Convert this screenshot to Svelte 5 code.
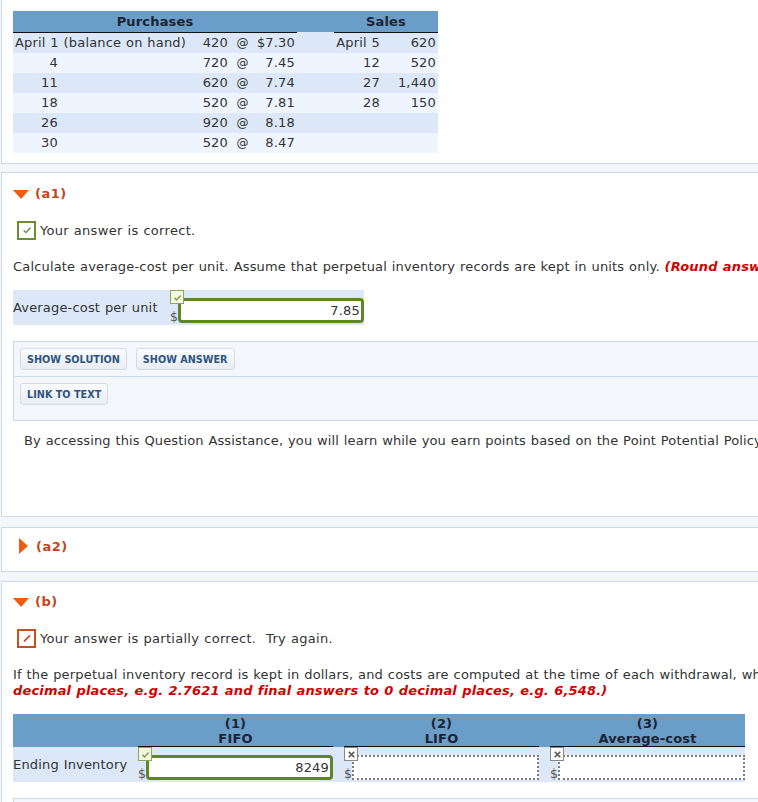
<script>
	const purchases = [
		["April 1 (balance on hand)", "420", "$7.30", "April 5", "620"],
		["4", "720", "7.45", "12", "520"],
		["11", "620", "7.74", "27", "1,440"],
		["18", "520", "7.81", "28", "150"],
		["26", "920", "8.18", "", ""],
		["30", "520", "8.47", "", ""]
	];
</script>

<div class="page">
	<section class="card first">
		<table class="stock">
			<colgroup>
				<col style="width:177px" />
				<col style="width:40px" />
				<col style="width:20px" />
				<col style="width:47px" />
				<col style="width:37px" />
				<col style="width:48px" />
				<col style="width:56px" />
			</colgroup>
			<thead>
				<tr>
					<th colspan="4" class="ruled">Purchases</th>
					<th></th>
					<th colspan="2" class="ruled">Sales</th>
				</tr>
			</thead>
			<tbody>
				{#each purchases as row, i}
					<tr class:odd={i % 2 === 0}>
						<td>
							{#if i === 0}{row[0]}{:else}<span class="day">{row[0]}</span>{/if}
						</td>
						<td class="num">{row[1]}</td>
						<td class="at">@</td>
						<td class="num">{row[2]}</td>
						<td></td>
						<td class="num">{row[3]}</td>
						<td class="num">{row[4]}</td>
					</tr>
				{/each}
			</tbody>
		</table>
	</section>

	<section class="card a1">
		<h3><span class="tri down"></span>(a1)</h3>
		<div class="status">
			<span class="box ok">
				<svg viewBox="0 0 16 16" width="12" height="12"><path d="M3.5 8.5l3 3 6-6.5" fill="none" stroke="#5b8a2a" stroke-width="1.8" /></svg>
			</span>
			Your answer is correct.
		</div>
		<p class="prompt">Calculate average-cost per unit. Assume that perpetual inventory records are kept in units only. <em>(Round answer to 2 decimal places, e.g. 2.76.)</em></p>
		<div class="answer-row">
			<span class="label">Average-cost per unit</span>
			<span class="field wide">
				<span class="flag ok">
					<svg viewBox="0 0 16 16" width="11" height="11"><path d="M3.5 8.5l3 3 6-6.5" fill="none" stroke="#7a9a3a" stroke-width="2" /></svg>
				</span>
				<span class="dollar">$</span>
				<span class="input good">7.85</span>
			</span>
		</div>
		<div class="assist">
			<div class="assist-row">
				<button>SHOW SOLUTION</button>
				<button>SHOW ANSWER</button>
			</div>
			<div class="assist-row">
				<button>LINK TO TEXT</button>
			</div>
		</div>
		<p class="policy">By accessing this Question Assistance, you will learn while you earn points based on the Point Potential Policy.</p>
	</section>

	<section class="card a2">
		<h3><span class="tri right"></span>(a2)</h3>
	</section>

	<section class="card b">
		<h3><span class="tri down"></span>(b)</h3>
		<div class="status">
			<span class="box part">
				<svg viewBox="0 0 16 16" width="12" height="12"><path d="M4 12.5L12 4.5" fill="none" stroke="#c8501e" stroke-width="2.4" /></svg>
			</span>
			Your answer is partially correct.&nbsp; Try again.
		</div>
		<p class="prompt">If the perpetual inventory record is kept in dollars, and costs are computed at the time of each withdrawal, what is the amount<br /><em>decimal places, e.g. 2.7621 and final answers to 0 decimal places, e.g. 6,548.)</em></p>
		<table class="ending">
			<colgroup>
				<col style="width:125px" />
				<col style="width:195px" />
				<col style="width:11px" />
				<col style="width:195px" />
				<col style="width:11px" />
				<col style="width:195px" />
			</colgroup>
			<thead>
				<tr>
					<th></th>
					<th class="ruled">(1)<br />FIFO</th>
					<th></th>
					<th class="ruled">(2)<br />LIFO</th>
					<th></th>
					<th class="ruled">(3)<br />Average-cost</th>
				</tr>
			</thead>
			<tbody>
				<tr>
					<td class="label">Ending Inventory</td>
					<td>
						<span class="field">
							<span class="flag ok">
								<svg viewBox="0 0 16 16" width="11" height="11"><path d="M3.5 8.5l3 3 6-6.5" fill="none" stroke="#7a9a3a" stroke-width="2" /></svg>
							</span>
							<span class="dollar">$</span>
							<span class="input good">8249</span>
						</span>
					</td>
					<td></td>
					<td>
						<span class="field">
							<span class="flag bad">
								<svg viewBox="0 0 16 16" width="11" height="11"><path d="M4 4l8 8M12 4l-8 8" fill="none" stroke="#555" stroke-width="2.4" /></svg>
							</span>
							<span class="dollar">$</span>
							<span class="input empty"></span>
						</span>
					</td>
					<td></td>
					<td>
						<span class="field">
							<span class="flag bad">
								<svg viewBox="0 0 16 16" width="11" height="11"><path d="M4 4l8 8M12 4l-8 8" fill="none" stroke="#555" stroke-width="2.4" /></svg>
							</span>
							<span class="dollar">$</span>
							<span class="input empty"></span>
						</span>
					</td>
				</tr>
			</tbody>
		</table>
		<div class="assist stub"></div>
	</section>
</div>

<style>
	:global(body) {
		margin: 0;
		background: #f3f7fc;
	}

	.page {
		width: 758px;
		height: 802px;
		overflow: hidden;
		background: #f3f7fc;
		font-family: "DejaVu Sans", Verdana, sans-serif;
		font-size: 13px;
		letter-spacing: 0.17px;
		word-spacing: 0.5px;
		color: #333;
	}

	.card {
		width: 900px;
		margin-left: 1px;
		box-sizing: border-box;
		background: #fff;
		border: 1px solid #ccd9e6;
		padding: 0 11px;
	}

	.first {
		height: 164px;
		border-top: none;
		padding-top: 11px;
		margin-bottom: 8px;
	}

	.a1 {
		height: 345px;
		margin-bottom: 10px;
	}

	.a2 {
		height: 45px;
		margin-bottom: 9px;
	}

	.b {
		height: 260px;
	}

	table {
		border-collapse: collapse;
		table-layout: fixed;
	}

	.stock {
		width: 425px;
	}

	th {
		background: #6b9dc9;
		color: #1a2433;
		font-weight: bold;
		padding: 0;
		text-align: center;
		line-height: 16px;
	}

	.stock th {
		height: 21px;
		padding-top: 1px;
		box-sizing: border-box;
	}

	th.ruled {
		border-bottom: 1px solid #111;
	}

	.stock td {
		height: 20px;
		padding: 0 2px;
		background: #eef5ff;
		white-space: nowrap;
	}

	.stock tr.odd td {
		background: #dce8f8;
	}

	.num {
		text-align: right;
	}

	.stock td.at {
		text-align: center;
		padding: 0 0 0 5px;
		font-size: 12px;
	}

	.day {
		display: inline-block;
		width: 43px;
		text-align: right;
	}

	h3 {
		margin: 0;
		height: 20px;
		display: flex;
		align-items: center;
		font-size: 13px;
		font-weight: bold;
		color: #c4461c;
		letter-spacing: 0.5px;
	}

	.a1 h3 {
		padding-top: 10px;
	}

	.b h3 {
		padding-top: 9px;
	}

	.a2 h3 {
		padding-top: 8px;
	}

	.tri {
		display: inline-block;
		margin-right: 6px;
	}

	.tri.down {
		border-left: 8.5px solid transparent;
		border-right: 8.5px solid transparent;
		border-top: 9px solid #f25a0e;
		margin-top: 3px;
	}

	.tri.right {
		margin-left: 6px;
		margin-right: 8px;
		border-top: 8.5px solid transparent;
		border-bottom: 8.5px solid transparent;
		border-left: 9px solid #f25a0e;
	}

	.status {
		display: flex;
		align-items: center;
		margin: 17px 0 0 5px;
		height: 20px;
		white-space: pre;
		letter-spacing: 0.3px;
	}

	.box {
		width: 15px;
		height: 15px;
		border: 1px solid;
		display: flex;
		align-items: center;
		justify-content: center;
		background: #fff;
	}

	.box.ok {
		border-color: #6a8f32;
		outline: 0.5px solid #6a8f32;
	}

	.box.part {
		border-color: #c8501e;
		outline: 0.5px solid #c8501e;
	}

	.prompt {
		margin: 19px 0 0;
		line-height: 16px;
		white-space: nowrap;
	}

	em {
		color: #d40000;
		font-weight: bold;
	}

	.answer-row {
		display: flex;
		width: 351px;
		height: 35px;
		margin-top: 15px;
		background: #dce8f8;
		position: relative;
	}

	.answer-row .label {
		width: 157px;
		padding-top: 10px;
	}

	.field {
		display: block;
		position: relative;
		height: 35px;
	}

	.field.wide {
		flex: 1;
	}

	.flag {
		position: absolute;
		top: 0;
		left: 0;
		width: 12px;
		height: 12px;
		border: 1px solid;
		background: #fff;
		display: flex;
		align-items: center;
		justify-content: center;
		z-index: 1;
	}

	.flag.ok {
		border-color: #8aa84e;
		background: #f4f8e8;
	}

	.flag.bad {
		border-color: #888;
	}

	.dollar {
		position: absolute;
		left: 0;
		bottom: 1px;
		line-height: 14px;
		font-size: 12.5px;
		color: #555;
	}

	.input {
		position: absolute;
		left: 8px;
		right: 0;
		top: 8px;
		height: 25px;
		box-sizing: border-box;
		background: #fff;
		text-align: right;
		padding-right: 1px;
		line-height: 19px;
	}

	.input.good {
		border: 3px solid #5f8526;
		border-radius: 4px;
	}

	.input.empty {
		border: 2px dotted #7b7b7b;
	}

	.assist {
		background: #f3f7fc;
		border: 1px solid #ccd9e6;
		border-right: none;
		margin-top: 16px;
		height: 80px;
		box-sizing: border-box;
	}

	.assist-row {
		height: 35px;
		box-sizing: border-box;
		padding: 6px 6px 0;
		display: flex;
		gap: 9px;
	}

	.assist-row:first-child {
		border-bottom: 1px solid #ccd9e6;
	}

	button {
		height: 22px;
		padding: 0 6px;
		border: 1px solid #d3dbe4;
		border-radius: 3px;
		background: linear-gradient(#fbfcfe, #e8edf3);
		color: #2f5480;
		font-family: "DejaVu Sans", Verdana, sans-serif;
		font-size: 9.7px;
		font-weight: bold;
	}

	.policy {
		margin: 12px 0 0 11px;
		line-height: 16px;
		white-space: nowrap;
		letter-spacing: 0.13px;
	}

	.ending {
		width: 732px;
		margin-top: 15px;
	}

	.ending th {
		height: 32px;
		padding-top: 2px;
		vertical-align: top;
		line-height: 15px;
		box-sizing: border-box;
	}

	.ending td {
		height: 35px;
		padding: 0;
		background: #dce8f8;
	}

	.ending .label {
		box-sizing: border-box;
	}

	.stub {
		margin-top: 16px;
	}
</style>
